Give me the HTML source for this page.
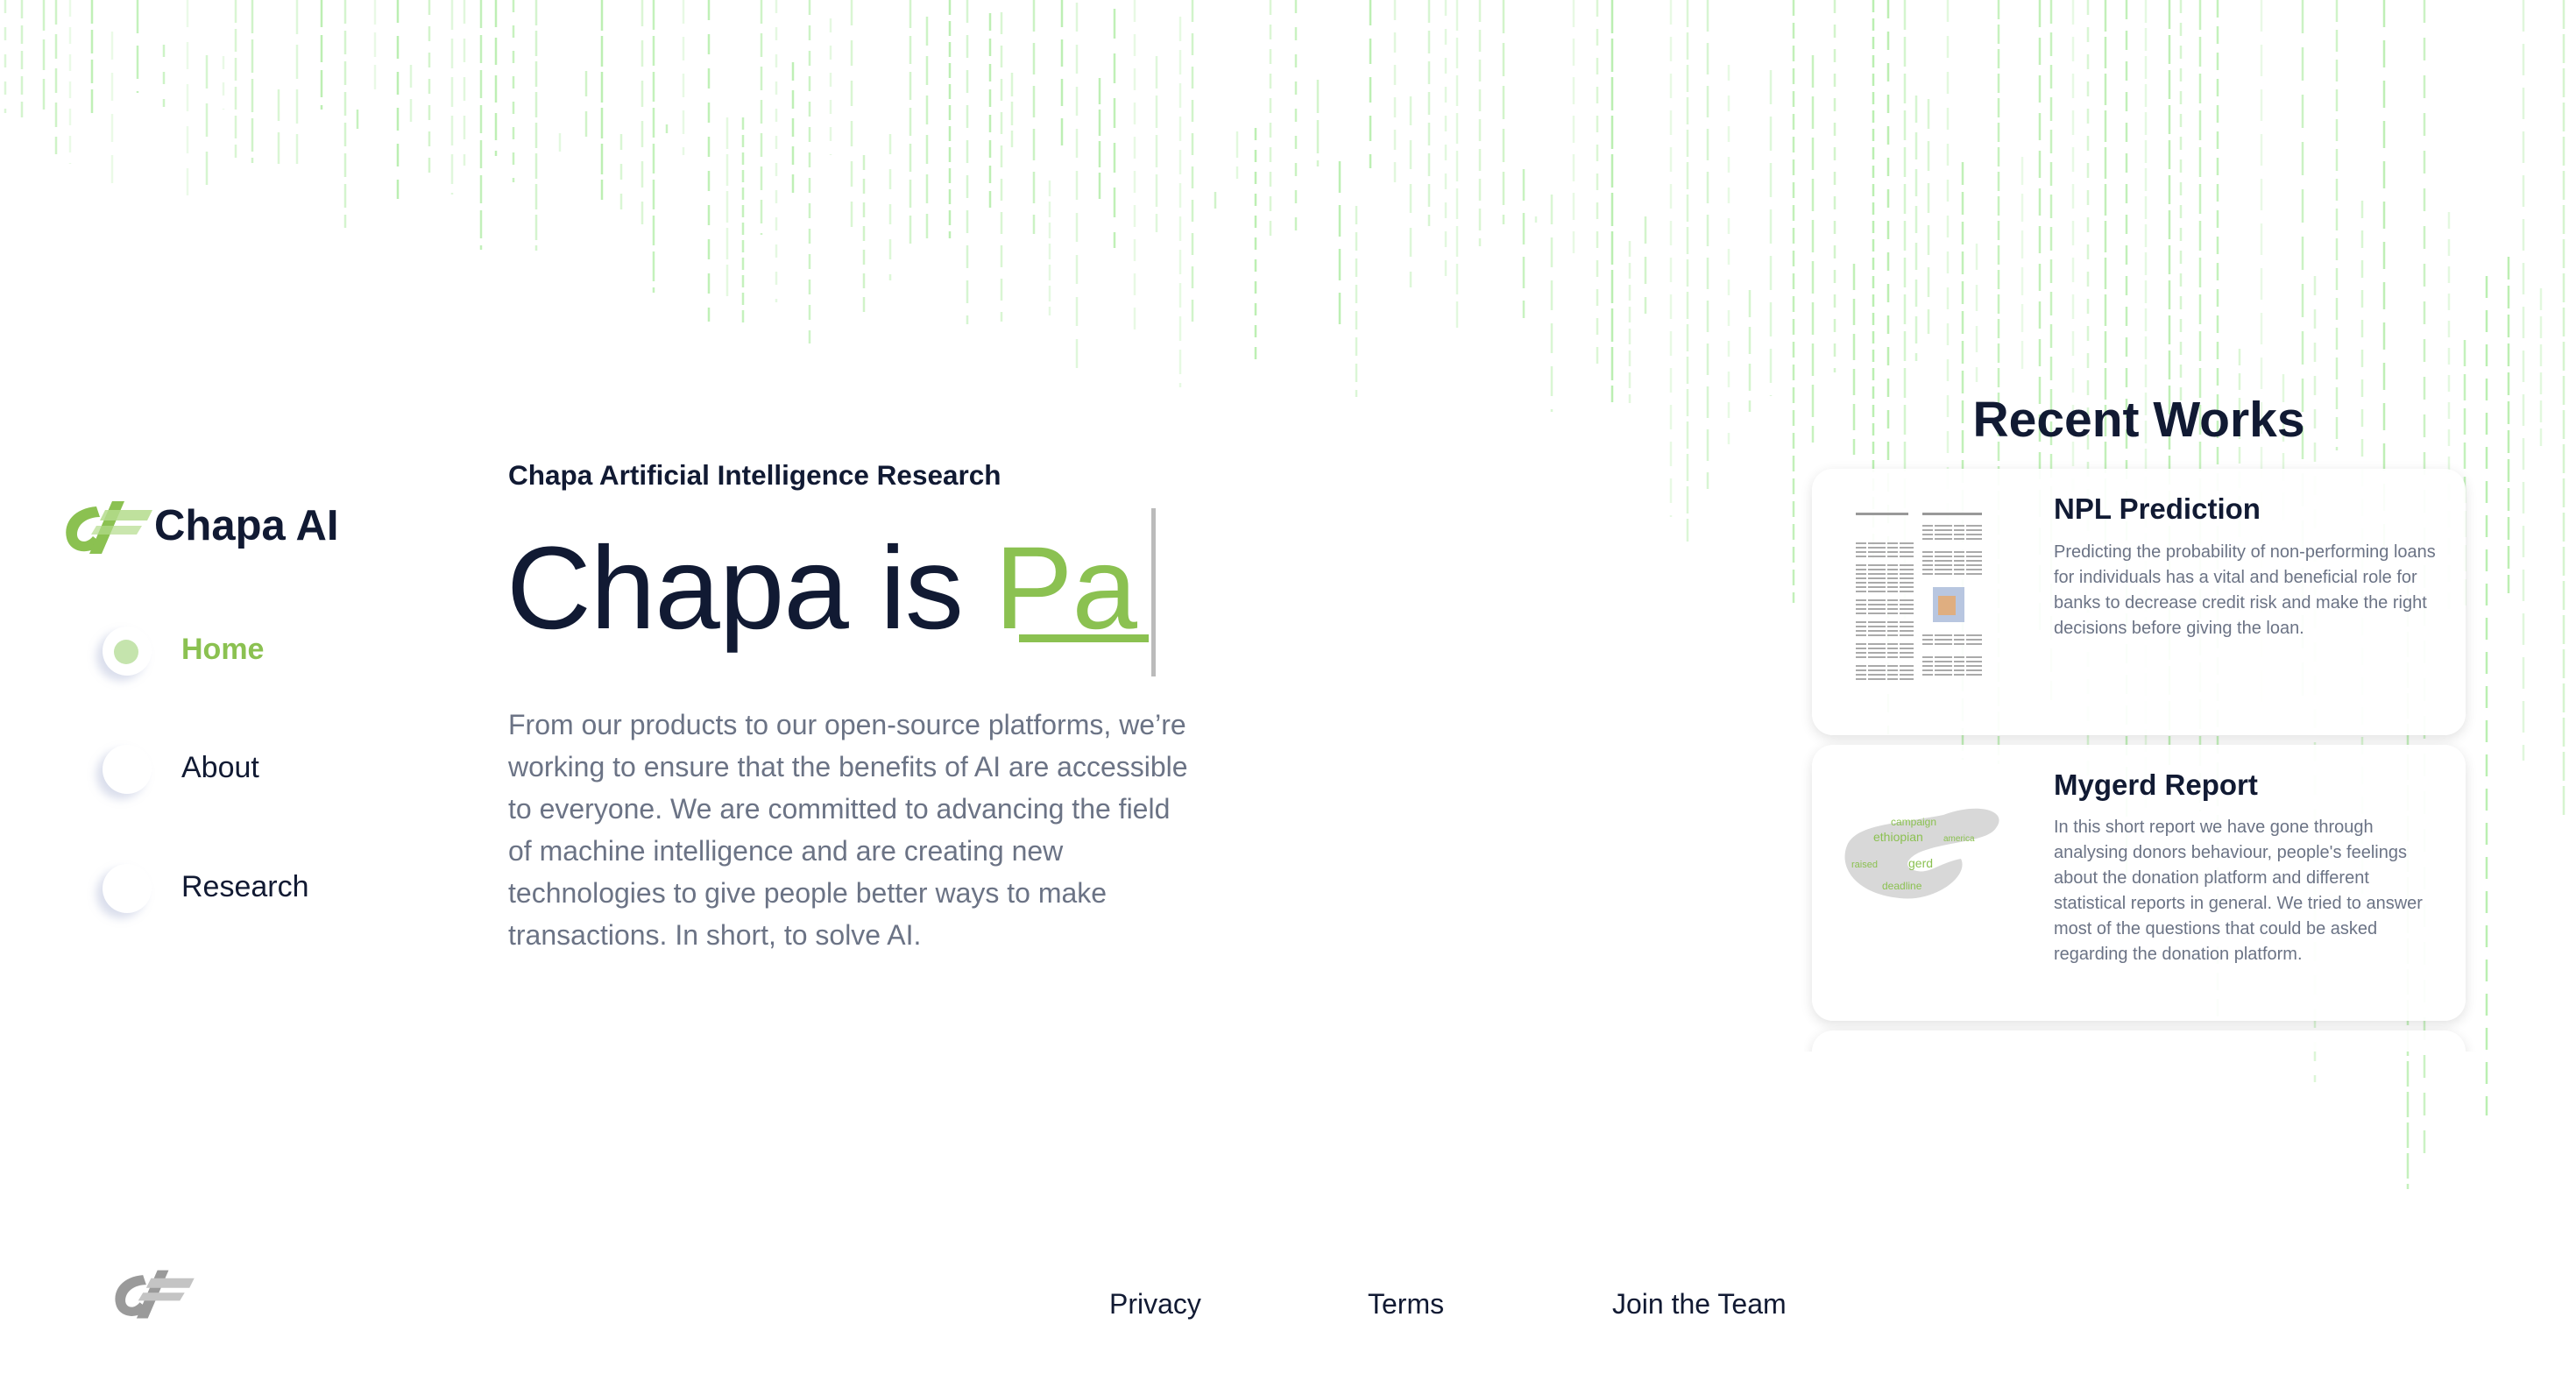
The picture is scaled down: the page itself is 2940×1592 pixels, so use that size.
<!DOCTYPE html>
<html><head><meta charset="utf-8">
<style>
html,body{margin:0;padding:0;width:2940px;height:1592px;overflow:hidden;background:#fff;font-family:"Liberation Sans",sans-serif;color:#111a33}
#rain{position:absolute;left:0;top:0}
.abs{position:absolute}
.nav{position:absolute;left:207px;font-size:34px;color:#111a33}
.dot{position:absolute;width:56px;height:56px;border-radius:50%;background:#fff;box-shadow:-7px 6px 10px rgba(150,160,200,.35)}
.card{position:absolute;left:2068px;width:746px;background:rgba(255,255,255,.92);border-radius:24px;box-shadow:0 4px 14px rgba(0,0,0,.12)}
.card h3{position:absolute;left:276px;margin:0;font-size:33px;font-weight:bold;color:#111a33}
.card p{position:absolute;left:276px;margin:0;font-size:20px;line-height:29px;color:#6b7385;width:440px}
.foot{position:absolute;top:1470px;font-size:32px;color:#111a33}
</style></head><body>
<svg id="rain" width="2940" height="1592"></svg>

<svg class="abs" style="left:70px;top:568px" width="108" height="70" viewBox="0 0 108 70">
 <path d="M40 10 C15 12 2 28 6 46 C10 64 34 66 46 52 L36 44 C28 54 18 50 18 42 C18 30 30 22 44 22 Z" fill="#8bc151"/>
 <path d="M58 4 L72 4 L46 64 L32 64 Z" fill="#8bc151"/>
 <path d="M50 14 L104 14 L98 26 L44 26 Z" fill="#b4dc8c" opacity=".85"/>
 <path d="M40 32 L92 32 L86 42 L34 42 Z" fill="#b4dc8c" opacity=".7"/>
</svg>
<div class="abs" style="left:176px;top:572px;font-size:49px;font-weight:bold;color:#111a33">Chapa AI</div>

<div class="dot" style="left:117px;top:715px"></div>
<div class="abs" style="left:130px;top:730px;width:28px;height:28px;border-radius:50%;background:#c5e4ad"></div>
<div class="nav" style="top:722px;color:#8bc151;font-weight:bold">Home</div>
<div class="dot" style="left:117px;top:850px"></div>
<div class="nav" style="top:857px">About</div>
<div class="dot" style="left:117px;top:986px"></div>
<div class="nav" style="top:993px">Research</div>

<div class="abs" style="left:580px;top:524px;font-size:31.5px;font-weight:bold">Chapa Artificial Intelligence Research</div>
<div class="abs" style="left:578px;top:592px;font-size:134px;line-height:160px;white-space:nowrap;letter-spacing:-1px">Chapa is <span style="color:#8bc151">Pa</span></div>
<div class="abs" style="left:1163px;top:724px;width:148px;height:9px;background:#8bc151"></div>
<div class="abs" style="left:1314px;top:580px;width:5px;height:192px;background:#bbb"></div>
<div class="abs" style="left:580px;top:803px;width:780px;font-size:32px;line-height:48px;color:#6b7385">From our products to our open-source platforms, we’re working to ensure that the benefits of AI are accessible to everyone. We are committed to advancing the field of machine intelligence and are creating new technologies to give people better ways to make transactions. In short, to solve AI.</div>

<div class="abs" style="left:2068px;width:746px;text-align:center;top:446px;font-size:57px;font-weight:bold">Recent Works</div>

<div class="card" style="top:535px;height:304px">
 <svg class="abs" style="left:46px;top:40px" width="152" height="218">
  <g fill="#999">
   <rect x="4" y="10" width="60" height="3"/><rect x="80" y="10" width="68" height="3"/>
  </g>
  <g stroke="#aaa" stroke-width="2" stroke-dasharray="12 2 20 2">
   <line x1="4" y1="45" x2="70" y2="45"/><line x1="4" y1="50" x2="70" y2="50"/><line x1="4" y1="55" x2="70" y2="55"/><line x1="4" y1="60" x2="70" y2="60"/><line x1="4" y1="70" x2="70" y2="70"/><line x1="4" y1="75" x2="70" y2="75"/><line x1="4" y1="80" x2="70" y2="80"/><line x1="4" y1="85" x2="70" y2="85"/><line x1="4" y1="90" x2="70" y2="90"/><line x1="4" y1="95" x2="70" y2="95"/><line x1="4" y1="100" x2="70" y2="100"/><line x1="4" y1="110" x2="70" y2="110"/><line x1="4" y1="115" x2="70" y2="115"/><line x1="4" y1="120" x2="70" y2="120"/><line x1="4" y1="125" x2="70" y2="125"/><line x1="4" y1="135" x2="70" y2="135"/><line x1="4" y1="140" x2="70" y2="140"/><line x1="4" y1="145" x2="70" y2="145"/><line x1="4" y1="150" x2="70" y2="150"/><line x1="4" y1="160" x2="70" y2="160"/><line x1="4" y1="165" x2="70" y2="165"/><line x1="4" y1="170" x2="70" y2="170"/><line x1="4" y1="175" x2="70" y2="175"/><line x1="4" y1="185" x2="70" y2="185"/><line x1="4" y1="190" x2="70" y2="190"/><line x1="4" y1="195" x2="70" y2="195"/><line x1="4" y1="200" x2="70" y2="200"/>
   <line x1="80" y1="25" x2="148" y2="25"/><line x1="80" y1="30" x2="148" y2="30"/><line x1="80" y1="35" x2="148" y2="35"/><line x1="80" y1="40" x2="148" y2="40"/><line x1="80" y1="55" x2="148" y2="55"/><line x1="80" y1="60" x2="148" y2="60"/><line x1="80" y1="65" x2="148" y2="65"/><line x1="80" y1="70" x2="148" y2="70"/><line x1="80" y1="75" x2="148" y2="75"/><line x1="80" y1="80" x2="148" y2="80"/><line x1="80" y1="150" x2="148" y2="150"/><line x1="80" y1="155" x2="148" y2="155"/><line x1="80" y1="160" x2="148" y2="160"/><line x1="80" y1="175" x2="148" y2="175"/><line x1="80" y1="180" x2="148" y2="180"/><line x1="80" y1="185" x2="148" y2="185"/><line x1="80" y1="190" x2="148" y2="190"/><line x1="80" y1="195" x2="148" y2="195"/>
  </g>
  <rect x="92" y="95" width="36" height="40" fill="#b8c6e0"/><rect x="98" y="105" width="20" height="22" fill="#e8a868" opacity=".8"/>
 </svg>
 <h3 style="top:27px">NPL Prediction</h3>
 <p style="top:81px">Predicting the probability of non-performing loans for individuals has a vital and beneficial role for banks to decrease credit risk and make the right decisions before giving the loan.</p>
</div>

<div class="card" style="top:850px;height:315px">
 <svg class="abs" style="left:30px;top:60px" width="190" height="130" viewBox="0 0 190 130">
  <path d="M120 20 C160 5 195 15 180 35 C170 50 130 50 100 60 C80 66 70 80 90 84 C105 87 115 75 140 70 C150 90 110 120 70 115 C20 110 0 80 10 55 C20 30 70 30 120 20 Z" fill="#d8d8d8"/>
  <g fill="#8bc151" font-family="Liberation Sans" font-size="14">
   <text x="40" y="50">ethiopian</text><text x="60" y="32" font-size="12">campaign</text><text x="80" y="80">gerd</text><text x="50" y="105" font-size="12">deadline</text><text x="15" y="80" font-size="11">raised</text><text x="120" y="50" font-size="10">america</text>
  </g>
 </svg>
 <h3 style="top:27px">Mygerd Report</h3>
 <p style="top:80px">In this short report we have gone through analysing donors behaviour, people's feelings about the donation platform and different statistical reports in general. We tried to answer most of the questions that could be asked regarding the donation platform.</p>
</div>
<div style="position:absolute;left:2059px;top:1170px;width:770px;height:30px;overflow:hidden">
 <div class="card" style="left:9px;top:6px;height:60px"></div>
</div>

<svg class="abs" style="left:122px;top:1446px" width="108" height="64" viewBox="0 0 108 70">
 <path d="M40 10 C15 12 2 28 6 46 C10 64 34 66 46 52 L36 44 C28 54 18 50 18 42 C18 30 30 22 44 22 Z" fill="#9a9a9a"/>
 <path d="M58 4 L72 4 L46 64 L32 64 Z" fill="#9a9a9a"/>
 <path d="M50 14 L104 14 L98 26 L44 26 Z" fill="#c4c4c4"/>
 <path d="M40 32 L92 32 L86 42 L34 42 Z" fill="#c4c4c4"/>
</svg>
<div class="foot" style="left:1266px">Privacy</div>
<div class="foot" style="left:1561px">Terms</div>
<div class="foot" style="left:1840px">Join the Team</div>

<script>
(function(){
 var s=document.getElementById('rain'),seed=11;
 function r(){seed=(seed*16807)%2147483647;return seed/2147483647;}
 var pts=[[0,200],[300,260],[600,330],[900,400],[1200,430],[1500,470],[1800,560],[2000,700],[2200,900],[2400,1200],[2600,1330],[2800,1380],[2940,1000]];
 function mx(x){for(var i=0;i<pts.length-1;i++){if(x<=pts[i+1][0]){var t=(x-pts[i][0])/(pts[i+1][0]-pts[i][0]);return pts[i][1]+t*(pts[i+1][1]-pts[i][1]);}}return 1000;}
 var h='';
 for(var x=6;x<2940;x+=12+r()*18){
  var m=mx(x);var y0=r()<0.6?0:r()*m*0.5;var y1=m*(0.35+r()*0.65);if(y1<=y0)continue;
  var op=(0.2+r()*0.5).toFixed(2);var d=(14+r()*26)|0,g=(6+r()*12)|0;
  h+='<line x1="'+x.toFixed(0)+'" y1="'+y0.toFixed(0)+'" x2="'+x.toFixed(0)+'" y2="'+y1.toFixed(0)+'" stroke="#9ee890" stroke-width="2.5" stroke-dasharray="'+d+' '+g+'" opacity="'+op+'"/>';
 }
 s.innerHTML=h;
})();
</script>
</body></html>
